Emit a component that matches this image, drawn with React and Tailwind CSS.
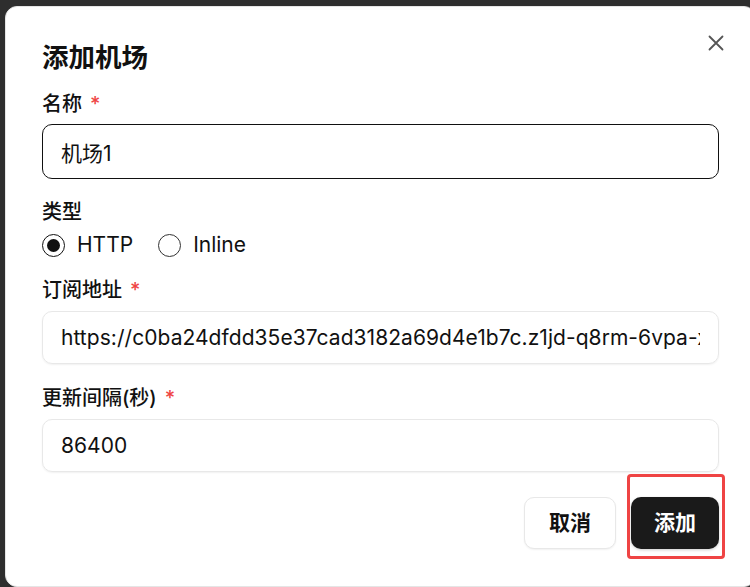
import React, { useState } from "react";

const FONT = { fontFamily: '"Inter", "Noto Sans CJK SC", sans-serif' };

const Label = ({ children, required, className = "" }) => (
  <div className={`h-[28px] flex items-center text-[20px] font-medium text-[#111] leading-[28px] ${className}`}>
    {children}
    {required && <span className="ml-[8px] text-[#ef4444]">*</span>}
  </div>
);

const Radio = ({ checked, label, onClick }) => (
  <button type="button" onClick={onClick} className="flex items-center gap-[12px]">
    <span
      className={`w-[23px] h-[23px] rounded-full border-[1.5px] flex items-center justify-center ${
        checked ? "border-[#111]" : "border-[#333]"
      }`}
    >
      {checked && <span className="w-[13px] h-[13px] rounded-full bg-[#111]" />}
    </span>
    <span className="text-[21px] text-[#111]">{label}</span>
  </button>
);

const fieldClass =
  "mt-[7px] w-full h-[53px] rounded-[10px] border border-[#e8e8e8] shadow-[0_1px_2px_rgba(0,0,0,0.06)] px-[18px] text-[21px] tracking-[0.05px] text-[#111] outline-none";

export default function App() {
  const [form, setForm] = useState({
    name: "机场1",
    type: "http",
    url: "https://c0ba24dfdd35e37cad3182a69d4e1b7c.z1jd-q8rm-6vpa-x",
    interval: "86400",
  });

  const set = (key) => (e) => setForm((prev) => ({ ...prev, [key]: e.target.value }));

  return (
    <div className="w-[750px] h-[587px] overflow-hidden bg-[#2e2e2e] pt-[6px] pl-[5px]" style={FONT}>
      <div className="relative w-[751px] h-[581px] bg-white rounded-[12px] border border-[#e5e5e5] px-[36px] pt-[34px]">
        {/* close */}
        <button className="absolute right-[31px] top-[28px] text-[#555]">
          <svg width="16" height="16" viewBox="0 0 16 16" fill="none" stroke="currentColor" strokeWidth="1.8" strokeLinecap="round">
            <path d="M1.5 1.5l13 13M14.5 1.5l-13 13" />
          </svg>
        </button>

        <h2 className="h-[32px] leading-[32px] text-[26.5px] font-bold text-[#111]">添加机场</h2>

        <Label required className="mt-[17px]">名称</Label>
        <input
          value={form.name}
          onChange={set("name")}
          className="mt-[6px] w-full h-[55px] rounded-[10px] border-[1.5px] border-[#111] px-[18px] text-[21px] text-[#111] outline-none"
        />

        <Label className="mt-[19px]">类型</Label>
        <div className="mt-[5px] h-[28px] flex items-center gap-[25px]">
          <Radio checked={form.type === "http"} label="HTTP" onClick={() => setForm((p) => ({ ...p, type: "http" }))} />
          <Radio checked={form.type === "inline"} label="Inline" onClick={() => setForm((p) => ({ ...p, type: "inline" }))} />
        </div>

        <Label required className="mt-[17px]">订阅地址</Label>
        <input value={form.url} onChange={set("url")} className={fieldClass} />

        <Label required className="mt-[20px]">更新间隔(秒)</Label>
        <input value={form.interval} onChange={set("interval")} className={fieldClass} />

        <div className="mt-[25px] flex justify-end gap-[15px]">
          <button className="h-[52px] w-[92px] rounded-[10px] border border-[#e8e8e8] bg-white shadow-[0_1px_2px_rgba(0,0,0,0.06)] text-[21px] font-semibold text-[#111]">
            取消
          </button>
          <div className="relative">
            <button className="h-[52px] w-[88px] rounded-[10px] bg-[#1a1a1a] shadow-[0_1px_3px_rgba(0,0,0,0.2)] text-[21px] font-semibold text-white">
              添加
            </button>
            <div className="absolute left-[-4px] right-[-6px] top-[-23px] bottom-[-10px] border-[3px] border-[#ef4444] rounded-[4px] pointer-events-none" />
          </div>
        </div>
      </div>
    </div>
  );
}
